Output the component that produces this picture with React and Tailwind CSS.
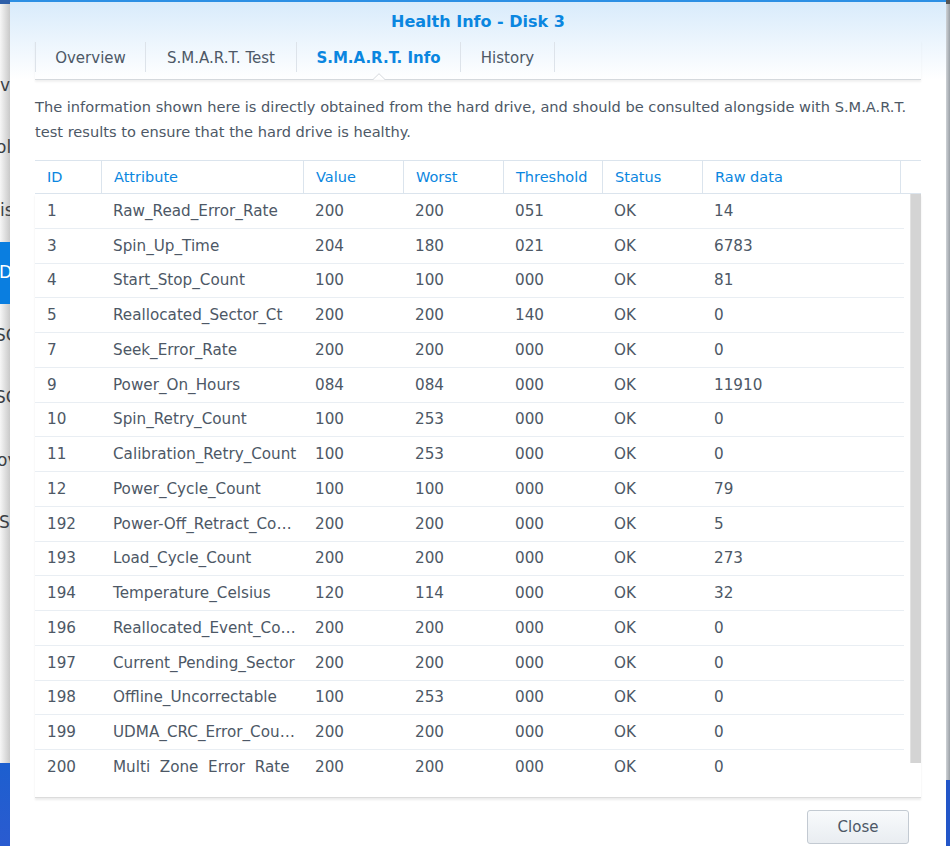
import React from "react";

const rows = [
  ["1", "Raw_Read_Error_Rate", "200", "200", "051", "OK", "14"],
  ["3", "Spin_Up_Time", "204", "180", "021", "OK", "6783"],
  ["4", "Start_Stop_Count", "100", "100", "000", "OK", "81"],
  ["5", "Reallocated_Sector_Ct", "200", "200", "140", "OK", "0"],
  ["7", "Seek_Error_Rate", "200", "200", "000", "OK", "0"],
  ["9", "Power_On_Hours", "084", "084", "000", "OK", "11910"],
  ["10", "Spin_Retry_Count", "100", "253", "000", "OK", "0"],
  ["11", "Calibration_Retry_Count", "100", "253", "000", "OK", "0"],
  ["12", "Power_Cycle_Count", "100", "100", "000", "OK", "79"],
  ["192", "Power-Off_Retract_Count", "200", "200", "000", "OK", "5"],
  ["193", "Load_Cycle_Count", "200", "200", "000", "OK", "273"],
  ["194", "Temperature_Celsius", "120", "114", "000", "OK", "32"],
  ["196", "Reallocated_Event_Count", "200", "200", "000", "OK", "0"],
  ["197", "Current_Pending_Sector", "200", "200", "000", "OK", "0"],
  ["198", "Offline_Uncorrectable", "100", "253", "000", "OK", "0"],
  ["199", "UDMA_CRC_Error_Cou\u2026", "200", "200", "000", "OK", "0"],
  ["200", "Multi\u00a0 Zone\u00a0 Error\u00a0 Rate", "200", "200", "000", "OK", "0"],
];

const colW = ["w-[66px]", "w-[202px]", "w-[100px]", "w-[100px]", "w-[99px]", "w-[100px]", "w-[202px]"];
const headers = ["ID", "Attribute", "Value", "Worst", "Threshold", "Status", "Raw data"];

const leftFrags = [
  { t: "v", cls: "ml-0" },
  { t: "ol", cls: "-ml-[4px]" },
  { t: "is", cls: "ml-0" },
  { t: "D", cls: "-ml-[1px]" },
  { t: "SC", cls: "-ml-[5px]" },
  { t: "SC", cls: "-ml-[5px]" },
  { t: "ov", cls: "-ml-[3px]" },
  { t: "S", cls: "-ml-[1px]" },
];

export default function App() {
  return (
    <div
      className="w-[950px] h-[846px] flex overflow-hidden bg-white text-[#4d5866]"
      style={{ fontFamily: '"DejaVu Sans", Verdana, sans-serif' }}
    >
      {/* background window at left */}
      <div className="w-[10px] shrink-0 flex flex-col overflow-hidden">
        <div className="h-[4px] bg-[#2f5fa8]" />
        <div className="flex-1 flex flex-col bg-gradient-to-r from-[#f6f6f6] to-[#c9c9c9] overflow-hidden pt-[50px]">
          {leftFrags.map((f, i) => (
            <div
              key={i}
              className={`h-[62.5px] shrink-0 flex items-center text-[17px] whitespace-nowrap ${
                i === 3 ? "bg-[#0a7ee0] text-white" : "text-[#3a3f45]"
              }`}
            >
              <span className={f.cls}>{f.t}</span>
            </div>
          ))}
        </div>
        <div className="h-[83px] bg-gradient-to-b from-[#1c5fcf] to-[#2a5bd0]" />
      </div>

      {/* dialog */}
      <div className="w-[936px] shrink-0 flex flex-col border-t-2 border-[#2c8fe4] bg-white">
        <div className="bg-gradient-to-b from-[#d8ebfb] to-[#ffffff]">
          <div className="h-[38px] pt-[2px] flex items-center justify-center text-[16px] font-bold text-[#0a86e0]">
            Health Info - Disk 3
          </div>
          <div className="h-[40px] px-[25px]">
            <div className="relative h-full border-b border-[#d5d9dd] shadow-[0_2px_2px_rgba(0,0,0,0.06)]">
              <div className="flex pt-[2px] text-[15px]">
                <div className="w-[111px] h-[30px] pt-[2px] flex items-center justify-center border-l border-r border-[#dde3ea]">Overview</div>
                <div className="w-[151px] h-[30px] pt-[2px] flex items-center justify-center border-r border-[#dde3ea]">S.M.A.R.T. Test</div>
                <div className="w-[164px] h-[30px] pt-[2px] flex items-center justify-center border-r border-[#dde3ea] font-bold text-[#0a86e0]">S.M.A.R.T. Info</div>
                <div className="w-[94px] h-[30px] pt-[2px] flex items-center justify-center border-r border-[#dde3ea]">History</div>
              </div>
              <div className="absolute left-[338px] bottom-[-1px] w-[12px] h-[7px]">
                <svg width="12" height="7" viewBox="0 0 12 7">
                  <path d="M0 6.5 L6 0.7 L12 6.5" fill="#ffffff" stroke="#d5d9dd" strokeWidth="1" />
                  <rect x="0.8" y="6.2" width="10.4" height="1" fill="#ffffff" />
                </svg>
              </div>
            </div>
          </div>
        </div>

        <div className="px-[25px] flex-1 flex flex-col">
          <p className="mt-[14px] text-[14.6px] leading-[25px] text-[#4d5866]">
            The information shown here is directly obtained from the hard drive, and should be consulted alongside with S.M.A.R.T. test results to ensure that the hard drive is healthy.
          </p>

          <div className="mt-[16px] flex flex-col">
            <div className="h-[34px] flex border-t border-b border-[#dbe4ed] text-[14.5px] text-[#0a86e0]">
              {headers.map((h, i) => (
                <div
                  key={h}
                  className={`${i === 6 ? "w-[199px]" : colW[i]} pl-[12px] pt-[2px] flex items-center ${i > 0 ? "border-l border-[#dbe4ed]" : ""} ${i === 6 ? "border-r border-[#dbe4ed]" : ""}`}
                >
                  {h}
                </div>
              ))}
              <div className="flex-1" />
            </div>
            <div className="h-[604px] flex overflow-hidden border-b border-[#dcdcdc] shadow-[0_2px_2px_rgba(0,0,0,0.08)]">
              <div className="w-[869px] flex flex-col text-[15.2px]">
                {rows.map((r, ri) => (
                  <div
                    key={r[0]}
                    className={`h-[34.75px] shrink-0 flex items-center pt-[1px] ${ri < rows.length - 1 ? "border-b border-[#e9eef3]" : ""}`}
                  >
                    {r.map((c, ci) => (
                      <div
                        key={ci}
                        className={`${colW[ci]} pl-[12px] pr-[6px] whitespace-nowrap overflow-hidden text-ellipsis`}
                      >
                        {c}
                      </div>
                    ))}
                  </div>
                ))}
              </div>
              <div className="w-[6px]" />
              <div className="w-[11px] h-[569px] bg-[#d4d4d4] border-l border-[#e2e2e2]" />
            </div>
          </div>

          <div className="flex justify-end pr-[12px] pt-[12px]">
            <button className="w-[102px] h-[34px] pt-[1px] rounded-[3px] border border-[#c3cad2] bg-gradient-to-b from-[#f8fafc] to-[#e9edf1] text-[15px] text-[#4d5866]">
              Close
            </button>
          </div>
        </div>
      </div>

      {/* right background strip */}
      <div className="w-[4px] shrink-0 flex flex-col">
        <div className="h-[4px] bg-[#555]" />
        <div className="flex-1 bg-gradient-to-r from-[#cfd3d7] to-[#9aa0a6]" />
        <div className="h-[66px] bg-[#2356c8]" />
      </div>
    </div>
  );
}
